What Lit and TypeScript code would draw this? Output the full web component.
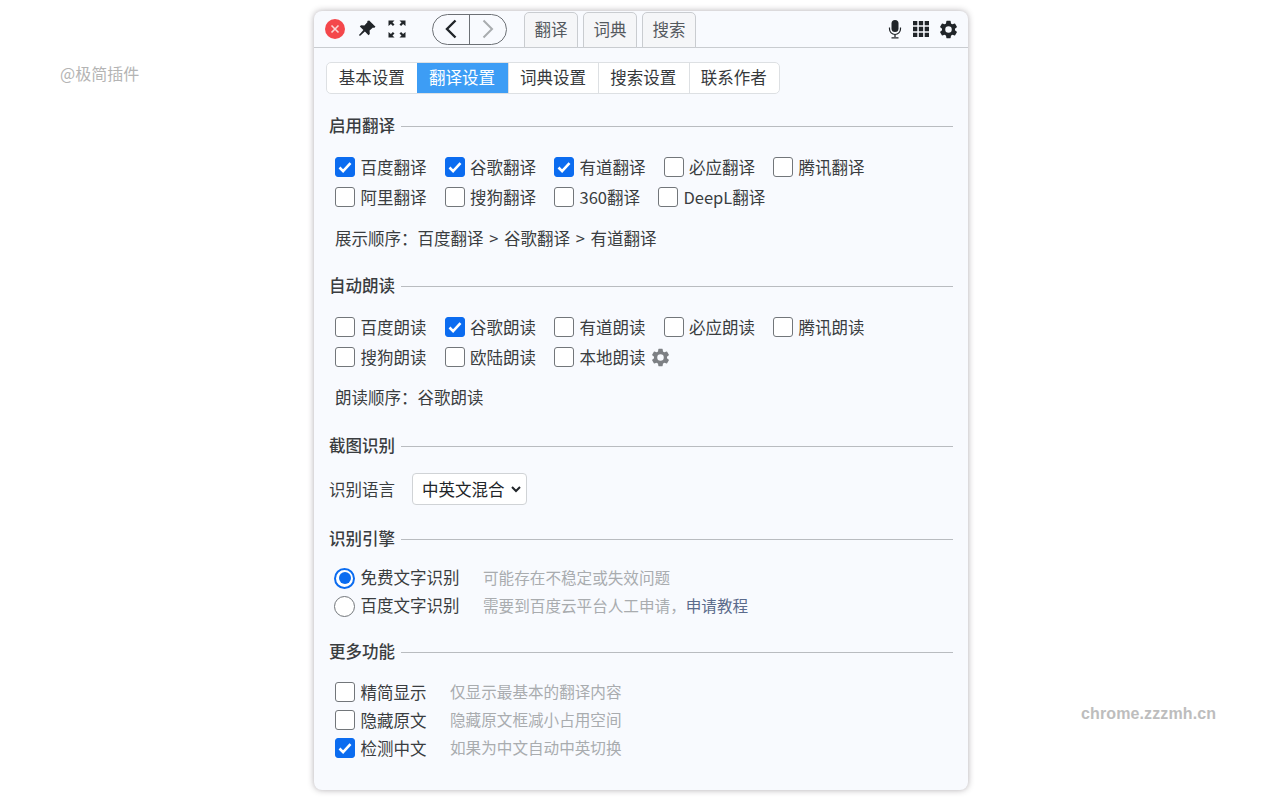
import { LitElement, html, css, svg } from "lit";
import { customElement } from "lit/decorators.js";

const gearPath = "M19.14 12.94c.04-.3.06-.61.06-.94s-.02-.64-.07-.94l2.03-1.58a.5.5 0 0 0 .12-.61l-1.92-3.32a.5.5 0 0 0-.59-.22l-2.39.96a7 7 0 0 0-1.62-.94l-.36-2.54a.48.48 0 0 0-.48-.41h-3.84a.48.48 0 0 0-.47.41l-.36 2.54c-.59.24-1.13.57-1.62.94l-2.39-.96a.49.49 0 0 0-.59.22L2.74 8.87a.48.48 0 0 0 .12.61l2.03 1.58c-.05.3-.09.63-.09.94s.02.64.07.94l-2.03 1.58a.5.5 0 0 0-.12.61l1.92 3.32c.12.22.37.29.59.22l2.39-.96c.5.38 1.03.7 1.62.94l.36 2.54c.05.24.24.41.48.41h3.84c.24 0 .44-.17.47-.41l.36-2.54c.59-.24 1.13-.56 1.62-.94l2.39.96c.22.08.47 0 .59-.22l1.92-3.32a.48.48 0 0 0-.12-.61l-2.01-1.58zM12 15.6A3.6 3.6 0 1 1 12 8.4a3.6 3.6 0 0 1 0 7.2z";

const gear = (cls: string) => html`<svg class=${cls} viewBox="1.500 1.500 21 21">${svg`<path d=${gearPath}></path>`}</svg>`;

interface Item { label: string; on?: boolean; }

const check = (it: Item) => html`
  <label class="check">
    <span class="box ${it.on ? "on" : ""}">
      ${it.on ? html`<svg viewBox="0 0 20 20"><path d="M4.500 10.500l3.600 3.600 7.400-8" fill="none" stroke="#fff" stroke-width="2.600"></path></svg>` : ""}
    </span>
    <span>${it.label}</span>
  </label>`;

@customElement("app-root")
export class AppRoot extends LitElement {
  static styles = css`
    :host {
      display: block;
      position: relative;
      width: 1280px;
      height: 800px;
      overflow: hidden;
      background: #fff;
      font-family: "Noto Sans CJK SC", "Liberation Sans", sans-serif;
      font-size: 16.5px;
      line-height: 20px;
      color: #3a3d40;
    }
    .wm { position: absolute; color: #b4b4b4; font-size: 16px; line-height: 20px; }
    .wm1 { left: 60px; top: 63px; }
    .wm2 { left: 1081px; top: 704px; font-family: "Liberation Sans", sans-serif; font-weight: 700; font-size: 16px; color: #bdbdbd; letter-spacing: 0.12px; }
    .page { display: flex; padding: 11px 0 0 314px; }
    .panel {
      width: 654px;
      height: 779px;
      background: #f8fafe;
      border-radius: 8px;
      box-shadow: 0 0 6px rgba(60, 50, 60, 0.4);
      overflow: hidden;
      box-sizing: border-box;
    }
    .bar {
      height: 37px;
      box-sizing: border-box;
      border-bottom: 1px solid #c9ccd0;
      display: flex;
      align-items: center;
      padding: 0 11px 0 11px;
    }
    .close { width: 20px; height: 20px; flex: none; display: block; }
    .pin { width: 20px; height: 20px; margin-left: 12px; flex: none; fill: #212529; }
    .full { width: 20px; height: 20px; margin-left: 10px; flex: none; }
    .nav {
      margin-left: 25px;
      width: 75px;
      height: 31px;
      box-sizing: border-box;
      border: 1px solid #6c7075;
      border-radius: 16px;
      display: flex;
      flex: none;
    }
    .nav span { flex: 1; display: flex; align-items: center; justify-content: center; }
    .nav span + span { border-left: 1px solid #6c7075; }
    .nav svg { width: 16px; height: 24px; }
    .ttabs { display: flex; gap: 5px; margin-left: 17px; align-self: flex-end; margin-bottom: -1px; }
    .ttab {
      width: 54px;
      height: 36px;
      box-sizing: border-box;
      border: 1px solid #c9ccd0;
      border-radius: 5px 5px 0 0;
      display: flex;
      align-items: center;
      justify-content: center;
      color: #555a5f;
      background: #f5f6f8;
      padding-bottom: 2px;
    }
    .right { margin-left: auto; display: flex; align-items: center; margin-right: -1px; }
    .right svg { display: block; fill: #212529; flex: none; }
    .mic { width: 18px; height: 20px; }
    .grid { width: 18px; height: 18px; margin-left: 8px; }
    .cog { width: 19px; height: 19px; margin-left: 9px; }
    .body { padding: 14px 15px 0 15px; }
    .seg {
      display: flex;
      width: max-content;
      height: 32px;
      box-sizing: border-box;
      border: 1px solid #dde0e3;
      border-radius: 5px;
      background: #fff;
      overflow: hidden;
      margin-left: -3px;
    }
    .seg span {
      width: 90.4px;
      box-sizing: border-box;
      display: flex;
      align-items: center;
      justify-content: center;
      border-left: 1px solid #dde0e3;
      color: #35383b;
      padding: 0 1px 2px 0;
    }
    .seg span:first-child { border-left: 0; }
    .seg span.active { background: #3d9df5; color: #fff; border-left: 0; }
    .head { display: flex; align-items: flex-start; gap: 6px; height: 20px; line-height: 18px; font-weight: 500; color: #3a3d40; }
    .head::after { content: ""; flex: 1; height: 1px; margin-top: 10px; background: #b9bcc0; }
    .checks { display: flex; flex-wrap: wrap; gap: 10px 18px; padding-left: 6px; }
    .check { display: flex; align-items: center; gap: 5.500px; height: 20px; }
    .box {
      width: 20px;
      height: 20px;
      box-sizing: border-box;
      border: 1px solid #72767a;
      border-radius: 3px;
      background: #fff;
      flex: none;
    }
    .box.on { background: #0b6cf0; border-color: #0b6cf0; }
    .box svg { display: block; width: 20px; height: 20px; margin: -1px; }
    .cog2 { width: 19px; height: 19px; fill: #7d8084; flex: none; }
    .order { padding-left: 6px; word-spacing: 2px; line-height: 18px; height: 20px; }
    .select {
      display: inline-flex;
      align-items: center;
      margin-left: 17px;
      width: 115px;
      height: 32px;
      box-sizing: border-box;
      border: 1px solid #d0d3d6;
      border-radius: 4px;
      background: #fff;
      padding-left: 9px;
      color: #212529;
      justify-content: space-between;
      padding-right: 5px;
    }
    .select svg { width: 10px; height: 8px; }
    .lang { display: flex; align-items: center; height: 32px; }
    .radios { display: flex; flex-direction: column; gap: 8px; padding-left: 5px; }
    .opt { display: flex; align-items: center; height: 20px; }
    .radio {
      width: 21px;
      height: 21px;
      box-sizing: border-box;
      border: 1px solid #72767a;
      border-radius: 50%;
      background: #fff;
      flex: none;
      margin-right: 5.500px;
    }
    .radio.on { border: 2px solid #0b6cf0; padding: 2.500px; }
    .radio.on::before { content: ""; display: block; width: 12px; height: 12px; border-radius: 50%; background: #0b6cf0; }
    .up { margin-bottom: 2px; }
    .hint { color: #a9acaf; margin: 0 0 2px 23.500px; font-size: 15.6px; }
    .link { color: #5b6b8c; }
    .more { display: flex; flex-direction: column; gap: 8px; padding-left: 6px; }
    .s22 { margin-top: 22px; }
    .s21 { margin-top: 21px; }
    .s27 { margin-top: 27px; }
    .s28 { margin-top: 28px; }
    .s17 { margin-top: 17px; }
    .s24 { margin-top: 24px; }
    .s19 { margin-top: 19px; }
    .s26 { margin-top: 26px; }
    .s20 { margin-top: 20px; }
  `;

  render() {
    const t1: Item[] = [
      { label: "百度翻译", on: true }, { label: "谷歌翻译", on: true }, { label: "有道翻译", on: true },
      { label: "必应翻译" }, { label: "腾讯翻译" }, { label: "阿里翻译" }, { label: "搜狗翻译" },
      { label: "360翻译" }, { label: "DeepL翻译" },
    ];
    const t2: Item[] = [
      { label: "百度朗读" }, { label: "谷歌朗读", on: true }, { label: "有道朗读" }, { label: "必应朗读" },
      { label: "腾讯朗读" }, { label: "搜狗朗读" }, { label: "欧陆朗读" },
    ];
    return html`
      <div class="wm wm1">@极简插件</div>
      <div class="wm wm2">chrome.zzzmh.cn</div>
      <div class="page">
        <div class="panel">
          <div class="bar">
            <svg class="close" viewBox="0 0 20 20">
              <circle cx="10" cy="10" r="10" fill="#f4474b"></circle>
              <path d="M6.500 6.500l7 7M13.500 6.500l-7 7" stroke="#fbd5d5" stroke-width="1.600" fill="none"></path>
            </svg>
            <svg class="pin" viewBox="0 0 20 20">
              <path d="M12.200 1.500l6.300 6.300-1.500 1.100-1-.5-3.400 3.200.2 3.400-1.300 1.200-3.600-3.600-5 4.400-.9-.9 4.400-5L2.800 7.500 4 6.200l3.400.2 3.200-3.400-.5-1z"></path>
            </svg>
            <svg class="full" viewBox="0 0 20 20" fill="#212529">
              <path d="M1.500 1.500h6l-2 2 2 2-1.600 1.600-2-2-2.400 2zM18.500 1.500h-6l2 2-2 2 1.600 1.600 2-2 2.400 2zM1.500 18.500h6l-2-2 2-2-1.600-1.600-2 2-2.400-2zM18.500 18.500h-6l2-2-2-2 1.600-1.600 2 2 2.400-2z"></path>
            </svg>
            <div class="nav">
              <span><svg viewBox="0 0 16 24"><path d="M12.500 3.500L4 12l8.500 8.500" fill="none" stroke="#212529" stroke-width="2.400"></path></svg></span>
              <span><svg viewBox="0 0 16 24"><path d="M3.500 3.500L12 12l-8.500 8.500" fill="none" stroke="#a9acaf" stroke-width="2"></path></svg></span>
            </div>
            <div class="ttabs">
              <div class="ttab">翻译</div><div class="ttab">词典</div><div class="ttab">搜索</div>
            </div>
            <div class="right">
              <svg class="mic" viewBox="0 0 18 20">
                <rect x="5.500" y="1" width="7" height="12" rx="3.500"></rect>
                <path d="M3.500 8.500V10a5.500 5.500 0 0 0 11 0V8.500" fill="none" stroke="#212529" stroke-width="1.200"></path>
                <path d="M9 15.500V18M5.500 18.800h7" fill="none" stroke="#212529" stroke-width="1.300"></path>
              </svg>
              <svg class="grid" viewBox="0 0 18 18">
                <path d="M1 1h4.300v4.300H1zM6.850 1h4.300v4.300h-4.300zM12.700 1H17v4.300h-4.300zM1 6.850h4.300v4.300H1zM6.850 6.850h4.300v4.300h-4.300zM12.700 6.850H17v4.300h-4.300zM1 12.700h4.300V17H1zM6.850 12.700h4.300V17h-4.300zM12.700 12.700H17V17h-4.300z"></path>
              </svg>
              ${gear("cog")}
            </div>
          </div>
          <div class="body">
            <div class="seg">
              <span>基本设置</span><span class="active">翻译设置</span><span>词典设置</span><span>搜索设置</span><span>联系作者</span>
            </div>
            <div class="head s22">启用翻译</div>
            <div class="checks s21">${t1.map(check)}</div>
            <div class="order s22">展示顺序：百度翻译 &gt; 谷歌翻译 &gt; 有道翻译</div>
            <div class="head s27">自动朗读</div>
            <div class="checks s21">
              ${t2.map(check)}
              <div class="check">
                ${check({ label: "本地朗读" })}
                ${gear("cog2")}
              </div>
            </div>
            <div class="order s21">朗读顺序：谷歌朗读</div>
            <div class="head s28">截图识别</div>
            <div class="lang s17">识别语言
              <div class="select">中英文混合
                <svg viewBox="0 0 10 8"><path d="M1 2l4 4 4-4" fill="none" stroke="#212529" stroke-width="2"></path></svg>
              </div>
            </div>
            <div class="head s24">识别引擎</div>
            <div class="radios s19">
              <div class="opt"><span class="radio on"></span><span class="up">免费文字识别</span><span class="hint">可能存在不稳定或失效问题</span></div>
              <div class="opt"><span class="radio"></span><span class="up">百度文字识别</span><span class="hint">需要到百度云平台人工申请，<span class="link">申请教程</span></span></div>
            </div>
            <div class="head s26">更多功能</div>
            <div class="more s20">
              <div class="opt">${check({ label: "精简显示" })}<span class="hint">仅显示最基本的翻译内容</span></div>
              <div class="opt">${check({ label: "隐藏原文" })}<span class="hint">隐藏原文框减小占用空间</span></div>
              <div class="opt">${check({ label: "检测中文", on: true })}<span class="hint">如果为中文自动中英切换</span></div>
            </div>
          </div>
        </div>
      </div>
    `;
  }
}
